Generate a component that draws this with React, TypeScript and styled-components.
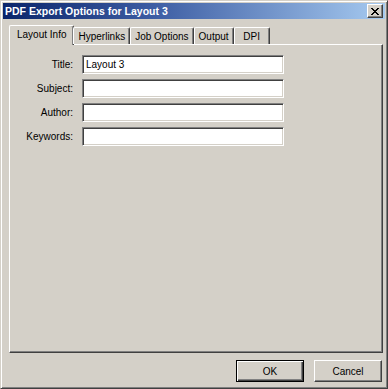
import React from "react";
import styled, { createGlobalStyle } from "styled-components";

const GlobalStyle = createGlobalStyle`
  html, body {
    margin: 0;
    padding: 0;
    background: #d4d0c8;
  }
  * {
    box-sizing: border-box;
  }
`;

const Window = styled.div`
  width: 388px;
  height: 389px;
  display: flex;
  flex-direction: column;
  background: #d4d0c8;
  border-top: 1px solid #d4d0c8;
  border-left: 1px solid #d4d0c8;
  border-right: 1px solid #404040;
  border-bottom: 1px solid #404040;
  box-shadow: inset 1px 1px 0 #ffffff, inset -1px -1px 0 #808080;
  padding: 2px;
  font-family: "Liberation Sans", Arial, sans-serif;
  font-size: 10px;
  color: #000;
`;

const TitleBar = styled.div`
  height: 16px;
  display: flex;
  align-items: center;
  justify-content: space-between;
  padding: 0 2px 0 2px;
  background: linear-gradient(to right, #0a246a 0%, #3e5ea4 40%, #a6caf0 100%);
`;

const Caption = styled.span`
  color: #fff;
  font-weight: bold;
  font-size: 10.5px;
`;

const CloseButton = styled.div`
  width: 16px;
  height: 14px;
  background: #d4d0c8;
  border-top: 1px solid #fff;
  border-left: 1px solid #fff;
  border-right: 1px solid #404040;
  border-bottom: 1px solid #404040;
  box-shadow: inset -1px -1px 0 #808080;
  display: flex;
  align-items: center;
  justify-content: center;
`;

const Body = styled.div`
  flex: 1;
  display: flex;
  flex-direction: column;
  padding: 6px 2px 0 6px;
`;

const TabRow = styled.div`
  display: flex;
  align-items: flex-end;
  height: 19px;
  position: relative;
  z-index: 1;
`;

const Tab = styled.div<{ active?: boolean }>`
  min-width: 36px;
  height: ${(p) => (p.active ? "20px" : "17px")};
  margin-bottom: ${(p) => (p.active ? "-1px" : "0")};
  padding: 0 ${(p) => (p.active ? "7px" : "4px")};
  padding-bottom: ${(p) => (p.active ? "2px" : "0")};
  margin-right: ${(p) => (p.active ? "-1px" : "0")};
  display: flex;
  align-items: center;
  justify-content: center;
  background: #d4d0c8;
  border-top: 1px solid #fff;
  border-left: 1px solid #fff;
  border-right: 1px solid #404040;
  box-shadow: inset -1px 0 0 #808080;
  border-radius: 2px 2px 0 0;
`;

const Panel = styled.div`
  height: 309px;
  border-top: 1px solid #fff;
  border-left: 1px solid #fff;
  border-right: 1px solid #404040;
  border-bottom: 1px solid #404040;
  box-shadow: inset -1px -1px 0 #808080;
  padding: 10px 0 0 0;
  display: flex;
  flex-direction: column;
  gap: 5px;
`;

const Row = styled.div`
  display: flex;
  align-items: center;
  height: 19px;
`;

const Label = styled.span`
  width: 63px;
  text-align: right;
`;

const Field = styled.div`
  margin-left: 9px;
  width: 202px;
  height: 19px;
  background: #fff;
  border-top: 1px solid #808080;
  border-left: 1px solid #808080;
  border-right: 1px solid #fff;
  border-bottom: 1px solid #fff;
  box-shadow: inset 1px 1px 0 #404040, inset -1px -1px 0 #d4d0c8;
  padding: 0 3px;
  display: flex;
  align-items: center;
`;

const Footer = styled.div`
  display: flex;
  justify-content: flex-end;
  gap: 10px;
  padding: 7px 1px 0 0;
`;

const Button = styled.div<{ primary?: boolean }>`
  width: 68px;
  height: 22px;
  display: flex;
  align-items: center;
  justify-content: center;
  background: #d4d0c8;
  border: 1px solid;
  border-color: ${(p) => (p.primary ? "#000" : "#fff #404040 #404040 #fff")};
  box-shadow: ${(p) =>
    p.primary
      ? "inset 1px 1px 0 #fff, inset -1px -1px 0 #404040, inset -2px -2px 0 #808080"
      : "inset -1px -1px 0 #808080"};
`;

const fields = [
  { label: "Title:", value: "Layout 3" },
  { label: "Subject:", value: "" },
  { label: "Author:", value: "" },
  { label: "Keywords:", value: "" },
];

const tabs = ["Layout Info", "Hyperlinks", "Job Options", "Output", "DPI"];

const App = () => {
  return (
    <>
      <GlobalStyle />
      <Window>
        <TitleBar>
          <Caption>PDF Export Options for Layout 3</Caption>
          <CloseButton>
            <svg width="8" height="7" viewBox="0 0 8 7">
              <path d="M0 0L7 7M7 0L0 7M1 0L8 7M8 0L1 7" stroke="#000" strokeWidth="1" />
            </svg>
          </CloseButton>
        </TitleBar>
        <Body>
          <TabRow>
            {tabs.map((t, i) => (
              <Tab key={t} active={i === 0}>
                {t}
              </Tab>
            ))}
          </TabRow>
          <Panel>
            {fields.map((f) => (
              <Row key={f.label}>
                <Label>{f.label}</Label>
                <Field>{f.value}</Field>
              </Row>
            ))}
          </Panel>
          <Footer>
            <Button primary>OK</Button>
            <Button>Cancel</Button>
          </Footer>
        </Body>
      </Window>
    </>
  );
};

export default App;
